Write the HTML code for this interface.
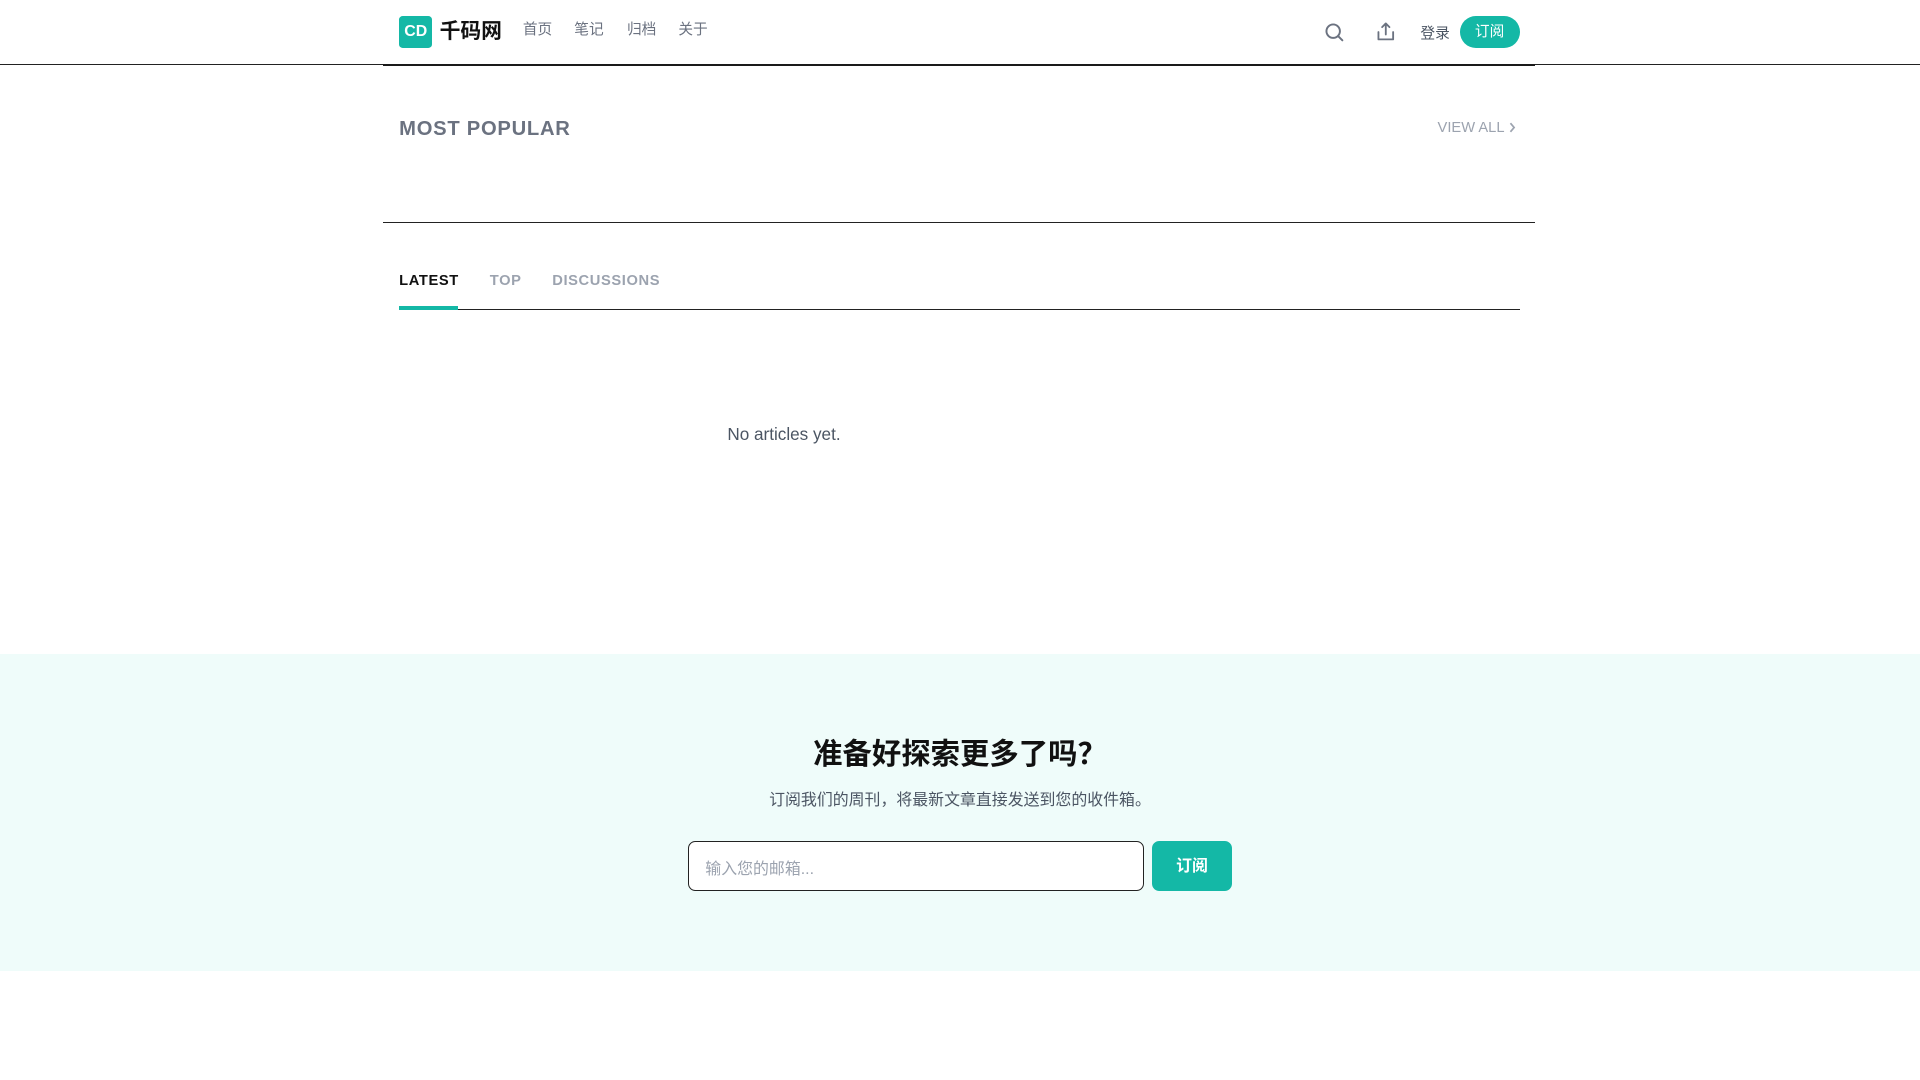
<!DOCTYPE html>
<html><head><meta charset="utf-8"><style>
html{zoom:1.22449}
body{margin:0;width:1568px;height:882px;background:#fff;font-family:"Liberation Sans","Noto Sans CJK SC",sans-serif;position:relative;overflow:hidden}
.a{position:absolute}
.nav{font-size:12px;color:#6b7280;top:15px}
</style></head><body>
<div class="a" style="left:0;top:52px;width:1568px;height:1px;background:#222"></div>
<div class="a" style="left:313px;top:52px;width:941px;height:2px;background:#1a1a1a"></div>
<div class="a" style="left:326px;top:13px;width:27px;height:26px;background:#14b8a6;border-radius:3px;color:#fff;font-weight:bold;font-size:13px;line-height:26px;text-align:center">CD</div>
<div class="a" style="left:359px;top:13px;font-size:17px;font-weight:bold;color:#111;line-height:26px">千码网</div>
<div class="a nav" style="left:427px">首页</div>
<div class="a nav" style="left:469px">笔记</div>
<div class="a nav" style="left:512px">归档</div>
<div class="a nav" style="left:554px">关于</div>
<svg class="a" style="left:1081px;top:18px" width="17" height="17" viewBox="0 0 17 17" fill="none" stroke="#6b7280" stroke-width="1.6" stroke-linecap="round"><circle cx="7.5" cy="7.5" r="5.5"/><path d="M11.5 11.5L15 15"/></svg>
<svg class="a" style="left:1124px;top:17px" width="16" height="17" viewBox="0 0 16 17" fill="none" stroke="#6b7280" stroke-width="1.5" stroke-linecap="round" stroke-linejoin="round"><path d="M8 11V2M5 5l3-3 3 3M2 9v6h12V9"/></svg>
<div class="a" style="left:1160px;top:18px;font-size:12px;color:#4b5563">登录</div>
<div class="a" style="left:1192px;top:13px;width:49px;height:26px;border-radius:13px;background:#14b8a6;color:#fff;font-size:12px;line-height:27px;text-align:center">订阅</div>
<div class="a" style="left:326px;top:96px;font-size:16.5px;font-weight:bold;color:#6b7280;letter-spacing:0.6px">MOST POPULAR</div>
<div class="a" style="left:1174px;top:98px;font-size:12px;color:#9ca3af">VIEW ALL <svg width="7" height="9" viewBox="0 0 7 9" style="vertical-align:-1px"><path d="M2 1l3 3.5L2 8" fill="none" stroke="#9ca3af" stroke-width="1.4"/></svg></div>
<div class="a" style="left:313px;top:181px;width:941px;height:1px;background:#222"></div>
<div class="a" style="left:326px;top:223px;font-size:12px;font-weight:bold;color:#111;letter-spacing:.5px">LATEST</div>
<div class="a" style="left:400px;top:223px;font-size:12px;font-weight:bold;color:#9ca3af;letter-spacing:.5px">TOP</div>
<div class="a" style="left:451px;top:223px;font-size:12px;font-weight:bold;color:#9ca3af;letter-spacing:.5px">DISCUSSIONS</div>
<div class="a" style="left:326px;top:252px;width:915px;height:1px;background:#222"></div>
<div class="a" style="left:326px;top:250px;width:48px;height:3px;background:#14b8a6"></div>
<div class="a" style="left:594px;top:346px;font-size:14px;color:#4b5563">No articles yet.</div>
<div class="a" style="left:0;top:534px;width:1568px;height:259px;background:#effcfa"></div>
<div class="a" style="left:0;top:597px;width:1568px;text-align:center;font-size:24px;font-weight:bold;color:#111">准备好探索更多了吗？</div>
<div class="a" style="left:0;top:643px;width:1568px;text-align:center;font-size:13px;color:#4b5563">订阅我们的周刊，将最新文章直接发送到您的收件箱。</div>
<div class="a" style="left:562px;top:687px;width:372px;height:41px;border:1px solid #222;border-radius:6px;background:#fff;box-sizing:border-box"></div>
<div class="a" style="left:576px;top:699px;font-size:13px;color:#9ca3af">输入您的邮箱...</div>
<div class="a" style="left:941px;top:687px;width:65px;height:41px;border-radius:6px;background:#14b8a6;color:#fff;font-weight:bold;font-size:13px;line-height:42px;text-align:center">订阅</div>
</body></html>
